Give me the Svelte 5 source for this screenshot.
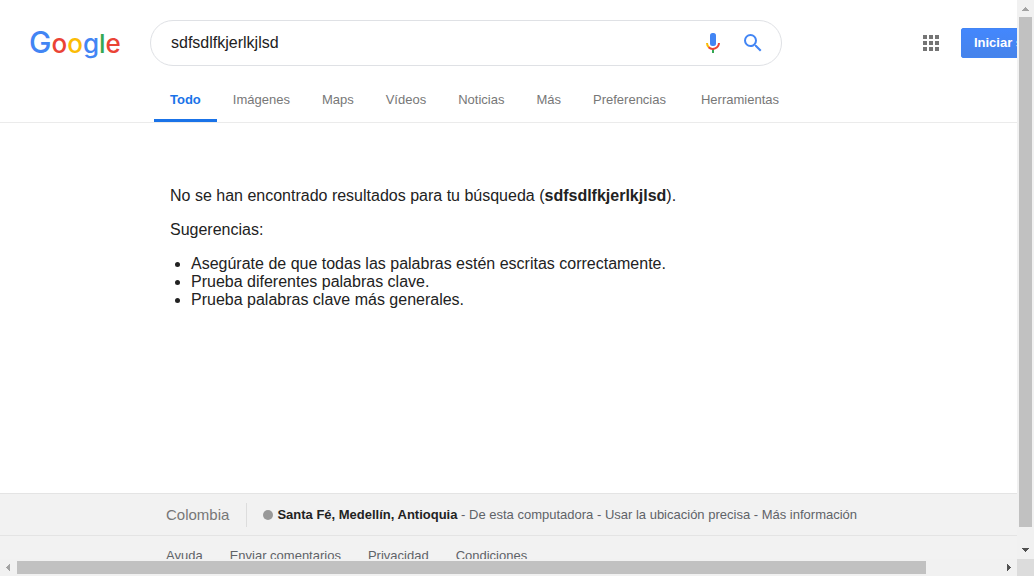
<script>
  let query = $state('sdfsdlfkjerlkjlsd');
  const tabs = ['Todo', 'Imágenes', 'Maps', 'Vídeos', 'Noticias', 'Más', 'Preferencias'];
  const tips = [
    'Asegúrate de que todas las palabras estén escritas correctamente.',
    'Prueba diferentes palabras clave.',
    'Prueba palabras clave más generales.'
  ];
  const links = ['Ayuda', 'Enviar comentarios', 'Privacidad', 'Condiciones'];
  const dots = [0, 6, 12];
</script>

<div class="shell">
  <div class="viewport">
    <div class="page">
      <header>
        <a class="logo" href="#inicio"><span class="blue initial">G</span><span class="red">o</span><span class="yellow">o</span><span class="blue">g</span><span class="green">l</span><span class="red">e</span></a>
        <form class="search" onsubmit={(e) => e.preventDefault()}>
          <input type="text" aria-label="Buscar" bind:value={query} />
          <button type="button" class="icon" aria-label="Buscar por voz">
            <svg width="24" height="24" viewBox="0 0 24 24" fill="none">
              <rect x="9" y="2" width="6" height="13" rx="2.500" fill="#4285f4" />
              <path d="M12 18v4" stroke="#34a853" stroke-width="2" />
              <path d="M6 12a6 6 0 0 0 2 4.500" stroke="#fbbc05" stroke-width="2" />
              <path d="M7.600 16.200A6.200 6.200 0 0 0 18 12" stroke="#ea4335" stroke-width="2" />
            </svg>
          </button>
          <button type="submit" class="icon" aria-label="Buscar con Google">
            <svg width="24" height="24" viewBox="0 0 24 24" fill="#4285f4">
              <path d="M15.500 14h-.79l-.28-.27A6.471 6.471 0 0 0 16 9.500 6.500 6.500 0 1 0 9.500 16c1.610 0 3.090-.59 4.230-1.570l.27.28v.79l5 4.990L20.490 19l-4.990-5zm-6 0C7.010 14 5 11.990 5 9.500S7.010 5 9.500 5 14 7.010 14 9.500 11.990 14 9.500 14z" />
            </svg>
          </button>
        </form>
        <div class="account">
          <button type="button" class="apps" aria-label="Aplicaciones de Google">
            <svg width="16" height="16" viewBox="0 0 16 16" fill="#757575" shape-rendering="crispEdges">
              {#each dots as y}
                {#each dots as x}
                  <rect {x} {y} width="4" height="4" />
                {/each}
              {/each}
            </svg>
          </button>
          <a class="signin" href="#sesion">Iniciar sesión</a>
        </div>
      </header>

      <nav>
        {#each tabs as tab, i}
          <a href="#tab" class:active={i === 0}>{tab}</a>
        {/each}
        <a href="#tab" class="tools">Herramientas</a>
      </nav>

      <main>
        <p>No se han encontrado resultados para tu búsqueda (<b>{query}</b>).</p>
        <p>Sugerencias:</p>
        <ul>
          {#each tips as tip}
            <li>{tip}</li>
          {/each}
        </ul>
      </main>

      <footer>
        <div class="place">
          <span class="country">Colombia</span>
          <span class="dot"></span>
          <span><b>Santa Fé, Medellín, Antioquia</b> - De esta computadora - <a href="#ubicacion">Usar la ubicación precisa</a> - <a href="#info">Más información</a></span>
        </div>
        <div class="links">
          {#each links as link}
            <a href="#pie">{link}</a>
          {/each}
        </div>
      </footer>
    </div>
  </div>

  <div class="bar vertical" aria-hidden="true">
    <svg width="17" height="17" viewBox="0 0 17 17" shape-rendering="crispEdges"><path d="M5 11h7L8.500 7z" fill="#a3a3a3" /></svg>
    <div class="track"><div class="thumb"></div></div>
    <svg width="17" height="17" viewBox="0 0 17 17" shape-rendering="crispEdges"><path d="M5 6h7L8.500 10z" fill="#505050" /></svg>
  </div>
  <div class="bar horizontal" aria-hidden="true">
    <svg width="17" height="17" viewBox="0 0 17 17" shape-rendering="crispEdges"><path d="M10 5v7L6 8.500z" fill="#a3a3a3" /></svg>
    <div class="track"><div class="thumb"></div></div>
    <svg width="17" height="17" viewBox="0 0 17 17" shape-rendering="crispEdges"><path d="M7 5v7l4-3.500z" fill="#505050" /></svg>
  </div>
  <div class="corner"></div>
</div>

<style>
  :global(body) { margin: 0; }
  .shell {
    display: grid;
    grid-template-columns: minmax(0, 1fr) 17px;
    grid-template-rows: minmax(0, 1fr) 17px;
    height: 100vh;
    font-family: "Liberation Sans", Arial, sans-serif;
    color: #222;
    background: #fff;
  }
  .viewport { overflow: hidden; }
  .page { min-width: 1100px; }
  a { color: inherit; text-decoration: none; }
  button { border: 0; padding: 0; background: none; cursor: pointer; }
  svg { display: block; }

  header { display: flex; align-items: center; padding: 20px 30px 0 29px; }
  .logo {
    width: 121px;
    font-family: Inter, sans-serif;
    font-size: 26px;
    line-height: 40px;
    font-weight: 500;
  }
  .initial { font-size: 30px; }
  .blue { color: #4285f4; }
  .red { color: #ea4335; }
  .yellow { color: #fbbc05; }
  .green { color: #34a853; }

  .search {
    display: flex;
    align-items: center;
    gap: 16px;
    box-sizing: border-box;
    width: 632px;
    height: 46px;
    padding: 0 16px 0 20px;
    border: 1px solid #dfe1e5;
    border-radius: 24px;
  }
  input {
    flex: 1;
    min-width: 0;
    border: 0;
    padding: 0;
    outline: 0;
    background: none;
    color: #222;
    font: 16px "Liberation Sans", Arial, sans-serif;
  }
  .account { display: flex; align-items: center; gap: 22px; margin-left: auto; }
  .signin {
    padding: 0 12px;
    border: 1px solid #4285f4;
    border-radius: 2px;
    background: linear-gradient(#4387fd, #4683ea);
    color: #fff;
    font-size: 13px;
    font-weight: bold;
    line-height: 28px;
  }

  nav {
    display: flex;
    margin-top: 11px;
    padding-left: 154px;
    border-bottom: 1px solid #ebebeb;
    color: #777;
    font-size: 13px;
    line-height: 16px;
  }
  nav a { padding: 15px 16px 14px; }
  nav .active { padding-bottom: 11px; border-bottom: 3px solid #1a73e8; color: #1a73e8; font-weight: bold; }
  nav .tools { margin-left: 3px; }

  main {
    box-sizing: border-box;
    min-height: 370px;
    padding: 64px 0 0 170px;
    font-size: 16px;
    line-height: 18px;
  }
  p { margin: 0 0 16px; }
  ul { margin: 0; padding-left: 21px; }

  footer { background: #f2f2f2; color: #5f6368; font-size: 13px; }
  .place {
    display: flex;
    align-items: center;
    height: 41px;
    padding-left: 166px;
    border-top: 1px solid #e4e4e4;
    border-bottom: 1px solid #e4e4e4;
  }
  .country {
    padding-right: 17px;
    margin-right: 16px;
    border-right: 1px solid #ddd;
    color: #777;
    font-size: 15px;
    line-height: 24px;
  }
  .dot { width: 10px; height: 10px; margin-right: 4px; border-radius: 50%; background: #999; }
  .place b { color: #222; }
  .links { display: flex; gap: 27px; padding: 12px 166px 24px; line-height: 16px; }

  .bar { display: flex; background: #f1f1f1; }
  .vertical { flex-direction: column; }
  .track { flex: 1; display: flex; min-width: 0; min-height: 0; }
  .thumb { background: #c1c1c1; }
  .vertical .thumb { width: 13px; height: calc(100% - 15px); margin-left: 2px; }
  .horizontal .thumb { width: calc(100% - 74px); height: 13px; margin-top: 2px; }
  .corner { background: #dcdcdc; }
</style>
